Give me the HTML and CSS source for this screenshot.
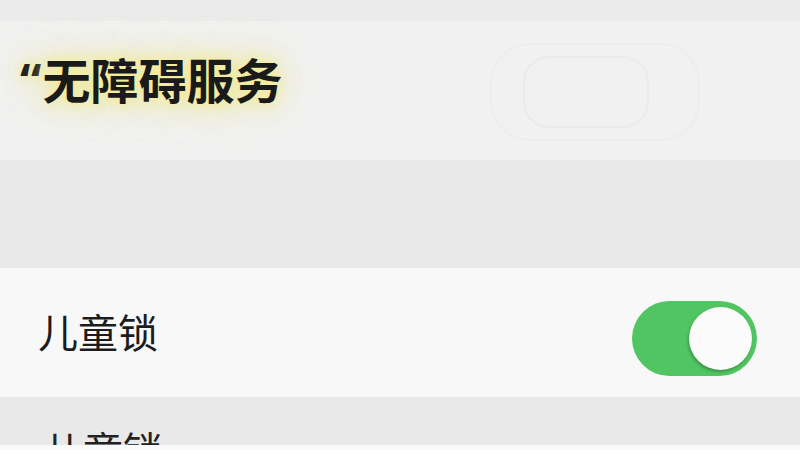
FILE: index.html
```html
<!DOCTYPE html>
<html lang="zh">
<head>
<meta charset="utf-8">
<link rel="stylesheet" href="styles.css">
</head>
<body>
<div class="page">
  <div class="topstrip"></div>
  <div class="header">
    <div class="title"><span class="quote">“</span>无障碍服务</div>
    <div class="ghost">
      <div class="ghost-inner"></div>
    </div>
  </div>
  <div class="gap"></div>
  <div class="row">
    <div class="label">儿童锁</div>
    <div class="toggle"><div class="knob"></div></div>
  </div>
  <div class="row2">
    <div class="label label-cut">儿童锁</div>
  </div>
  <div class="bottom"></div>
</div>
</body>
</html>
```
FILE: styles.css
```css
html, body {
  margin: 0;
  padding: 0;
  width: 800px;
  height: 450px;
  overflow: hidden;
  background: #f1f1f1;
  font-family: "Noto Sans CJK SC", "Noto Sans", sans-serif;
}
.page {
  display: flex;
  flex-direction: column;
  width: 800px;
  height: 450px;
}
.topstrip {
  height: 21px;
  background: #ebebeb;
}
.header {
  height: 139px;
  background: #f1f1f1;
  display: flex;
  align-items: center;
  justify-content: space-between;
  padding: 0 100px 0 20px;
  box-sizing: border-box;
}
.title {
  font-size: 48px;
  font-weight: 700;
  color: #1a1a1a;
  line-height: 1;
  margin-top: -23px;
  text-shadow: 0 0 10px rgba(244, 236, 140, 0.95), 0 0 24px rgba(240, 232, 130, 0.85), 0 0 44px rgba(240, 235, 150, 0.7);
}
.quote {
  font-family: "Noto Sans", sans-serif;
  margin-right: 1px;
}
.ghost {
  width: 206px;
  height: 94px;
  border: 2px solid #ededed;
  border-radius: 40px;
  display: flex;
  align-items: center;
  justify-content: center;
  margin-top: 2px;
}
.ghost-inner {
  width: 122px;
  height: 68px;
  border: 2px solid #ebebeb;
  border-radius: 26px;
  margin-left: -18px;
}
.gap {
  height: 108px;
  background: #e9e9e9;
}
.row {
  height: 129px;
  background: #f8f8f8;
  display: flex;
  align-items: center;
  justify-content: space-between;
  padding: 0 43px 0 38px;
  box-sizing: border-box;
}
.label {
  font-size: 40px;
  font-weight: 400;
  color: #1c1c1c;
  line-height: 1;
  margin-top: -4px;
}
.toggle {
  width: 125px;
  height: 75px;
  border-radius: 38px;
  background: #50c561;
  display: flex;
  align-items: center;
  justify-content: flex-end;
  padding-right: 5px;
  box-sizing: border-box;
  margin-top: 11px;
}
.knob {
  width: 63px;
  height: 63px;
  border-radius: 50%;
  background: #fbfbfb;
  box-shadow: -1px 2px 3px rgba(0, 0, 0, 0.25);
}
.row2 {
  height: 48px;
  background: #e9e9e9;
  overflow: hidden;
  padding: 32px 0 0 43px;
  box-sizing: border-box;
}
.label-cut {
  margin-top: 0;
  color: #222;
}
.bottom {
  flex: 1;
  background: #fafafa;
}
```
